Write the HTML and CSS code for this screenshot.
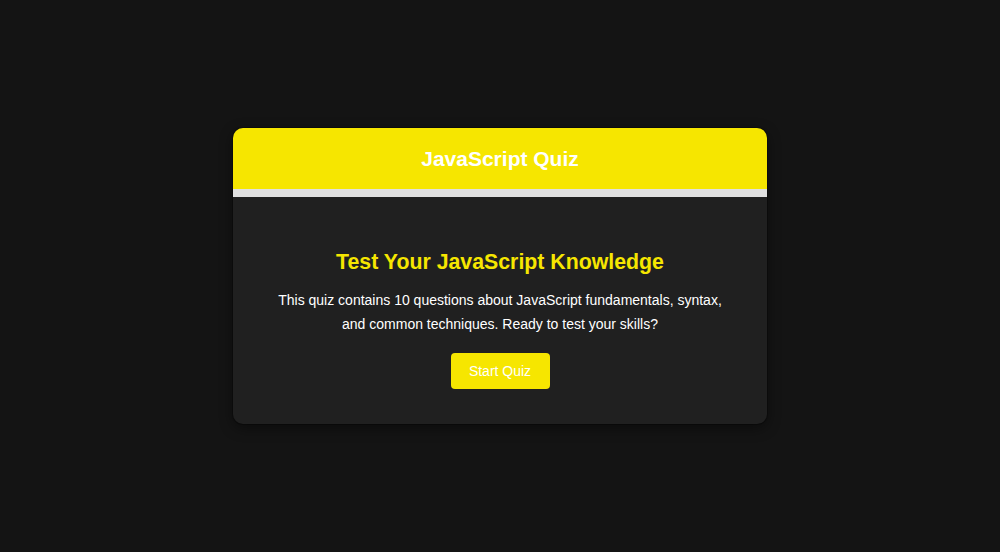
FILE: index.html
```html
<!DOCTYPE html>
<html lang="en">
<head>
<meta charset="utf-8">
<title>JavaScript Quiz</title>
<link rel="stylesheet" href="styles.css">
</head>
<body>
  <main class="page">
    <section class="quiz-card">
      <header class="quiz-header">
        <h1 class="quiz-title">JavaScript Quiz</h1>
      </header>
      <div class="progress"><div class="progress-fill"></div></div>
      <div class="quiz-body">
        <h2 class="intro-title">Test Your JavaScript Knowledge</h2>
        <p class="intro-text">This quiz contains 10 questions about JavaScript fundamentals, syntax, and common techniques. Ready to test your skills?</p>
        <button class="btn-start" type="button">Start Quiz</button>
      </div>
    </section>
  </main>
</body>
</html>
```

FILE: styles.css
```css
* { box-sizing: border-box; }

html, body {
  margin: 0;
  padding: 0;
  height: 100%;
}

body {
  background: #141414;
  font-family: "Liberation Sans", Arial, Helvetica, sans-serif;
  color: #f2f2f2;
}

.page {
  min-height: 100vh;
  display: flex;
  align-items: center;
  justify-content: center;
}

.quiz-card {
  width: 534px;
  background: #202020;
  border-radius: 10px;
  overflow: hidden;
  box-shadow: 0 0 0 1px rgba(0,0,0,0.25), 0 4px 14px rgba(0,0,0,0.45);
}

.quiz-header {
  background: #f6e600;
  padding: 18px 20px;
  text-align: center;
}

.quiz-title {
  margin: 0;
  font-size: 21px;
  line-height: 25px;
  font-weight: bold;
  color: #ffffff;
}

.progress {
  height: 8px;
  background: #e0e0e0;
}

.progress-fill {
  width: 0;
  height: 100%;
  background: #f6e600;
}

.quiz-body {
  padding: 53px 40px 35px;
  display: flex;
  flex-direction: column;
  align-items: center;
  text-align: center;
}

.intro-title {
  margin: 0 0 14px;
  font-size: 21.3px;
  line-height: 24px;
  font-weight: bold;
  color: #f6e600;
}

.intro-text {
  margin: 0 0 17px;
  font-size: 14px;
  line-height: 24px;
  color: #ffffff;
}

.btn-start {
  background: #f6e600;
  color: #ffffff;
  border: none;
  border-radius: 4px;
  padding: 0 18px;
  height: 36px;
  width: 99px;
  font-family: inherit;
  font-size: 14px;
  cursor: pointer;
}
```
